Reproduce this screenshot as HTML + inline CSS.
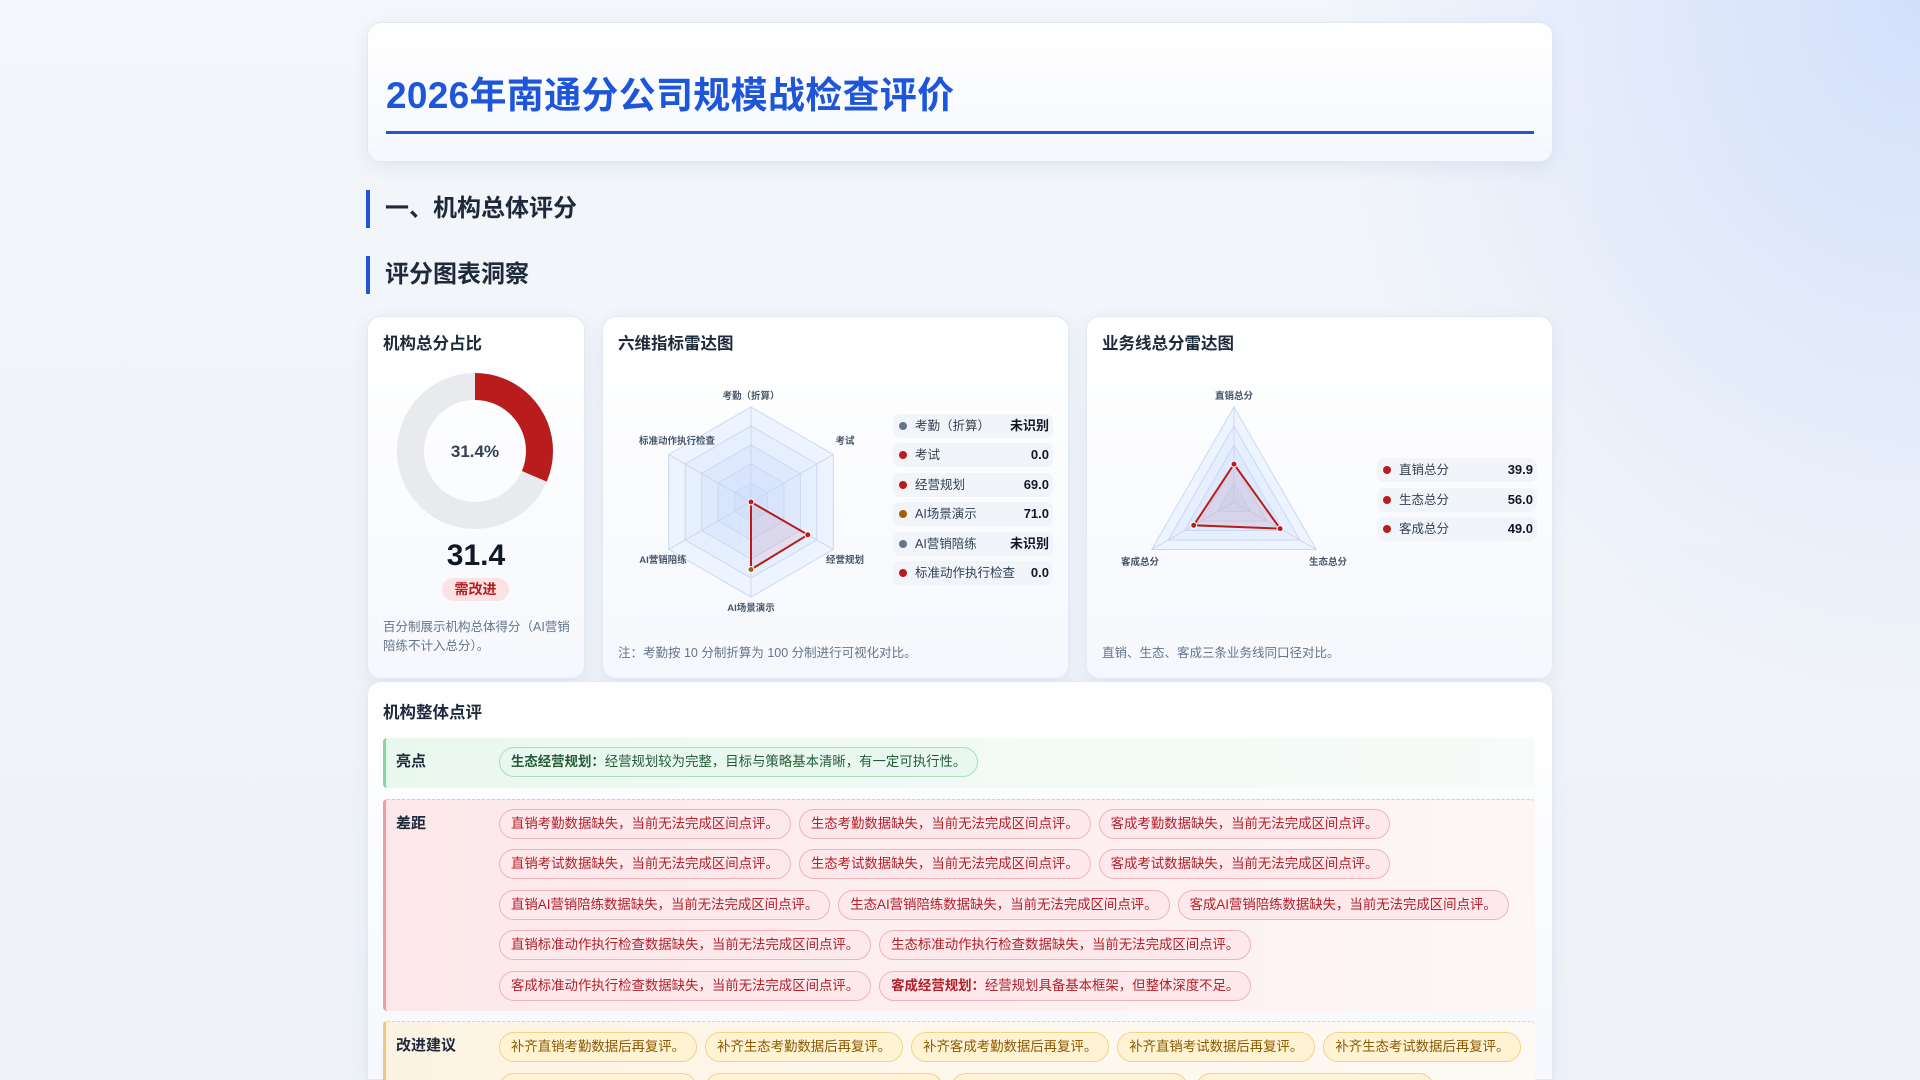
<!DOCTYPE html>
<html style="width:1920px;height:1080px;overflow:hidden"><head><meta charset="utf-8"><style>
*{box-sizing:border-box;margin:0;padding:0}
body{width:1920px;height:1080px;overflow:hidden;position:relative;font-family:"Liberation Sans","Noto Sans CJK SC",sans-serif;color:#1e293b;
background:radial-gradient(ellipse 600px 700px at 1920px 0px,#d3e0fb 0%,rgba(220,230,250,0) 100%),linear-gradient(180deg,#f3f6fb,#eef2f8);}
.abs{position:absolute}
.card{position:absolute;background:linear-gradient(180deg,#ffffff,#f6f8fd);border:1px solid #e3e9f4;border-radius:14px;box-shadow:0 6px 18px rgba(30,60,120,.07)}
.h1{left:386px;top:65px;font-size:37px;font-weight:700;color:#1d56d8;letter-spacing:0.3px}
.uline{left:386px;top:131px;width:1148px;height:3px;background:#1d56d8}
.sec{position:absolute;left:366px;height:38px;border-left:4px solid #1d56d8;padding-left:15px;font-size:24px;font-weight:700;line-height:38px;color:#1e293b}
.ct{position:absolute;font-size:16.5px;font-weight:700;color:#1e293b}
.note{position:absolute;font-size:12.5px;color:#64748b;line-height:19px}
.lg{position:absolute;height:24px;border-radius:7px;background:#f1f4f9;font-size:12.5px;color:#334155;line-height:24px;padding-left:22px}
.lg i{position:absolute;left:6px;top:8px;width:8px;height:8px;border-radius:50%}
.lg b{position:absolute;right:4px;top:0;font-size:13px;color:#111827}
.blk{position:absolute;left:383px;width:1152px;border-left:3px solid}
.lab{position:absolute;left:10px;font-size:15px;font-weight:700;color:#1e293b}
.row{position:absolute;left:113px;display:flex;gap:8px;white-space:nowrap}
.chip{height:30px;line-height:28px;padding:0 11px;border-radius:15px;font-size:13.4px;border:1px solid}
.g{background:#e8f8ee;border-color:#a8e0bb;color:#245c37}
.r{background:#fde9eb;border-color:#f1b3b9;color:#b3202a}
.y{background:#fff3d4;border-color:#f2d388;color:#8a5a00}
</style></head><body>

<div class="card" style="left:367px;top:22px;width:1186px;height:140px"></div>
<div class="abs h1">2026年南通分公司规模战检查评价</div>
<div class="abs uline"></div>

<div class="sec" style="top:190px">一、机构总体评分</div>
<div class="sec" style="top:256px">评分图表洞察</div>

<!-- card 1 -->
<div class="card" style="left:367px;top:316px;width:218px;height:363px"></div>
<div class="ct" style="left:383px;top:330px">机构总分占比</div>
<svg class="abs" style="left:395px;top:371px" width="160" height="160" viewBox="0 0 160 160">
<circle cx="80" cy="80" r="64.5" fill="none" stroke="#e8eaee" stroke-width="27"/>
<circle cx="80" cy="80" r="64.5" fill="none" stroke="#b91c1c" stroke-width="27" stroke-dasharray="127.3 300" transform="rotate(-90 80 80)"/>
<text x="80" y="86" text-anchor="middle" font-size="17" font-weight="700" fill="#334155" font-family="Liberation Sans,sans-serif">31.4%</text>
</svg>
<div class="abs" style="left:367px;width:218px;top:539px;text-align:center;font-size:30px;font-weight:700;color:#111827">31.4</div>
<div class="abs" style="left:442px;top:578px;width:67px;height:23px;border-radius:12px;background:#fbe3e5;color:#b91c1c;font-size:14px;font-weight:700;text-align:center;line-height:23px">需改进</div>
<div class="note" style="left:383px;top:618px;width:190px">百分制展示机构总体得分（AI营销陪练不计入总分）。</div>

<!-- card 2 -->
<div class="card" style="left:602px;top:316px;width:467px;height:363px"></div>
<div class="ct" style="left:618px;top:330px">六维指标雷达图</div>
<svg class="abs" style="left:602px;top:380px" width="290" height="250" viewBox="0 0 290 250">
<g transform="translate(149,122)" font-family="Liberation Sans,Noto Sans CJK SC,sans-serif">
<polygon points="0,-95 82.3,-47.5 82.3,47.5 0,95 -82.3,47.5 -82.3,-47.5" fill="#eef4ff" stroke="#c9d8f5"/>
<polygon points="0,-76 65.8,-38 65.8,38 0,76 -65.8,38 -65.8,-38" fill="#e6effe" stroke="#c9d8f5"/>
<polygon points="0,-57 49.4,-28.5 49.4,28.5 0,57 -49.4,28.5 -49.4,-28.5" fill="#dfe9fd" stroke="#c9d8f5"/>
<polygon points="0,-38 32.9,-19 32.9,19 0,38 -32.9,19 -32.9,-19" fill="#d9e5fd" stroke="#c9d8f5"/>
<polygon points="0,-19 16.5,-9.5 16.5,9.5 0,19 -16.5,9.5 -16.5,-9.5" fill="#d3e1fc" stroke="#c9d8f5"/>
<g stroke="#c9d3e6" stroke-width="0.8"><line x1="0" y1="0" x2="0" y2="-95"/><line x1="0" y1="0" x2="82.3" y2="-47.5"/><line x1="0" y1="0" x2="82.3" y2="47.5"/><line x1="0" y1="0" x2="0" y2="95"/><line x1="0" y1="0" x2="-82.3" y2="47.5"/><line x1="0" y1="0" x2="-82.3" y2="-47.5"/></g>
<polygon points="0,0 56.8,32.8 0,67.5" fill="rgba(185,28,28,0.08)" stroke="#b91c1c" stroke-width="2"/>
<circle cx="0" cy="0" r="3" fill="#b91c1c" stroke="#fff"/><circle cx="56.8" cy="32.8" r="3" fill="#b91c1c" stroke="#fff"/><circle cx="0" cy="67.5" r="3" fill="#a16207" stroke="#fff"/>
<g font-size="9.5" font-weight="700" fill="#475569">
<text x="0" y="-103" text-anchor="middle">考勤（折算）</text>
<text x="94" y="-58" text-anchor="middle">考试</text>
<text x="94" y="61" text-anchor="middle">经营规划</text>
<text x="0" y="109" text-anchor="middle">AI场景演示</text>
<text x="-88" y="61" text-anchor="middle">AI营销陪练</text>
<text x="-74" y="-58" text-anchor="middle">标准动作执行检查</text></g>
</g></svg>
<div class="lg" style="left:893px;top:414px;width:160px"><i style="background:#64748b"></i>考勤（折算）<b>未识别</b></div>
<div class="lg" style="left:893px;top:443px;width:160px"><i style="background:#b91c1c"></i>考试<b>0.0</b></div>
<div class="lg" style="left:893px;top:473px;width:160px"><i style="background:#b91c1c"></i>经营规划<b>69.0</b></div>
<div class="lg" style="left:893px;top:502px;width:160px"><i style="background:#a16207"></i>AI场景演示<b>71.0</b></div>
<div class="lg" style="left:893px;top:532px;width:160px"><i style="background:#64748b"></i>AI营销陪练<b>未识别</b></div>
<div class="lg" style="left:893px;top:561px;width:160px"><i style="background:#b91c1c"></i>标准动作执行检查<b>0.0</b></div>
<div class="note" style="left:618px;top:644px">注：考勤按 10 分制折算为 100 分制进行可视化对比。</div>

<!-- card 3 -->
<div class="card" style="left:1086px;top:316px;width:467px;height:363px"></div>
<div class="ct" style="left:1102px;top:330px">业务线总分雷达图</div>
<svg class="abs" style="left:1100px;top:380px" width="270" height="200" viewBox="0 0 270 200">
<g transform="translate(134,122)" font-family="Liberation Sans,Noto Sans CJK SC,sans-serif">
<polygon points="0,-95 82.3,47.5 -82.3,47.5" fill="#eef4ff" stroke="#c9d8f5"/>
<polygon points="0,-76 65.8,38 -65.8,38" fill="#e6effe" stroke="#c9d8f5"/>
<polygon points="0,-57 49.4,28.5 -49.4,28.5" fill="#dfe9fd" stroke="#c9d8f5"/>
<polygon points="0,-38 32.9,19 -32.9,19" fill="#d9e5fd" stroke="#c9d8f5"/>
<polygon points="0,-19 16.5,9.5 -16.5,9.5" fill="#d3e1fc" stroke="#c9d8f5"/>
<g stroke="#c9d3e6" stroke-width="0.8"><line x1="0" y1="0" x2="0" y2="-95"/><line x1="0" y1="0" x2="82.3" y2="47.5"/><line x1="0" y1="0" x2="-82.3" y2="47.5"/></g>
<polygon points="0,-37.9 46.1,26.6 -40.3,23.3" fill="rgba(185,28,28,0.08)" stroke="#b91c1c" stroke-width="2"/>
<circle cx="0" cy="-37.9" r="3" fill="#b91c1c" stroke="#fff"/><circle cx="46.1" cy="26.6" r="3" fill="#b91c1c" stroke="#fff"/><circle cx="-40.3" cy="23.3" r="3" fill="#b91c1c" stroke="#fff"/>
<g font-size="9.5" font-weight="700" fill="#475569">
<text x="0" y="-103" text-anchor="middle">直销总分</text>
<text x="94" y="63" text-anchor="middle">生态总分</text>
<text x="-94" y="63" text-anchor="middle">客成总分</text></g>
</g></svg>
<div class="lg" style="left:1377px;top:458px;width:160px"><i style="background:#b91c1c"></i>直销总分<b>39.9</b></div>
<div class="lg" style="left:1377px;top:488px;width:160px"><i style="background:#b91c1c"></i>生态总分<b>56.0</b></div>
<div class="lg" style="left:1377px;top:517px;width:160px"><i style="background:#b91c1c"></i>客成总分<b>49.0</b></div>
<div class="note" style="left:1102px;top:644px">直销、生态、客成三条业务线同口径对比。</div>

<!-- comment card -->
<div class="card" style="left:367px;top:681px;width:1186px;height:399px;border-bottom-left-radius:0;border-bottom-right-radius:0"></div>
<div class="ct" style="left:383px;top:699px">机构整体点评</div>

<div class="blk" style="top:738px;height:50px;border-color:#86d6a0;background:linear-gradient(90deg,#e9f8ee,#f3fbf6 60%,#f7fbf9);border-radius:4px">
<div class="lab" style="top:12px">亮点</div>
<div class="row" style="top:9px"><span class="chip g"><b>生态经营规划：</b>经营规划较为完整，目标与策略基本清晰，有一定可执行性。</span></div>
</div>

<div class="blk" style="top:799px;height:212px;border-color:#f09ca5;background:linear-gradient(90deg,#fce8ea,#fdf0f1 60%,#fdf6f7);border-top:1px dashed #d9c4e0;border-radius:4px">
<div class="lab" style="top:12px">差距</div>
<div class="row" style="top:9px"><span class="chip r">直销考勤数据缺失，当前无法完成区间点评。</span><span class="chip r">生态考勤数据缺失，当前无法完成区间点评。</span><span class="chip r">客成考勤数据缺失，当前无法完成区间点评。</span></div>
<div class="row" style="top:49px"><span class="chip r">直销考试数据缺失，当前无法完成区间点评。</span><span class="chip r">生态考试数据缺失，当前无法完成区间点评。</span><span class="chip r">客成考试数据缺失，当前无法完成区间点评。</span></div>
<div class="row" style="top:90px"><span class="chip r">直销AI营销陪练数据缺失，当前无法完成区间点评。</span><span class="chip r">生态AI营销陪练数据缺失，当前无法完成区间点评。</span><span class="chip r">客成AI营销陪练数据缺失，当前无法完成区间点评。</span></div>
<div class="row" style="top:130px"><span class="chip r">直销标准动作执行检查数据缺失，当前无法完成区间点评。</span><span class="chip r">生态标准动作执行检查数据缺失，当前无法完成区间点评。</span></div>
<div class="row" style="top:171px"><span class="chip r">客成标准动作执行检查数据缺失，当前无法完成区间点评。</span><span class="chip r"><b>客成经营规划：</b>经营规划具备基本框架，但整体深度不足。</span></div>
</div>

<div class="blk" style="top:1021px;height:59px;border-color:#f0c77c;background:linear-gradient(90deg,#fdf3e2,#fdf8ef 60%,#fdfaf5);border-top:1px dashed #e0d4c0;border-radius:4px 4px 0 0;overflow:hidden">
<div class="lab" style="top:12px">改进建议</div>
<div class="row" style="top:10px"><span class="chip y">补齐直销考勤数据后再复评。</span><span class="chip y">补齐生态考勤数据后再复评。</span><span class="chip y">补齐客成考勤数据后再复评。</span><span class="chip y">补齐直销考试数据后再复评。</span><span class="chip y">补齐生态考试数据后再复评。</span></div>
<div class="row" style="top:51px"><span class="chip y">补齐客成考试数据后再复评。</span><span class="chip y">补齐直销AI营销陪练数据后再复评。</span><span class="chip y">补齐生态AI营销陪练数据后再复评。</span><span class="chip y">补齐客成AI营销陪练数据后再复评。</span></div>
</div>
</body></html>
